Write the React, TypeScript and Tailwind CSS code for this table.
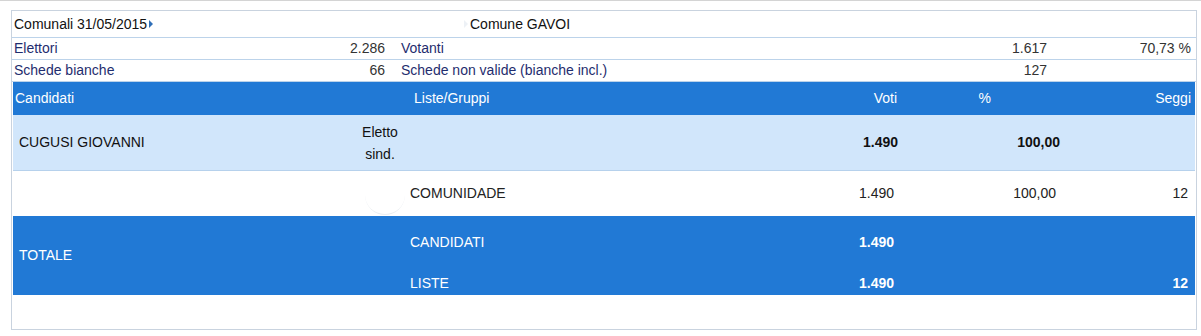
import React from "react";

const font = { fontFamily: '"Liberation Sans", Arial, sans-serif' };

function Tri({ faint }: { faint?: boolean }) {
  return (
    <span
      className={`inline-block w-0 h-0 border-y-[4px] border-y-transparent border-l-[4px] ${
        faint ? "border-l-[#edf1f6]" : "border-l-[#2f6fb8]"
      }`}
    />
  );
}

export default function App() {
  return (
    <div className="w-[1201px] h-[336px] bg-white border-t border-[#d4d4d4] pt-[9px] pl-[11px]" style={font}>
      <div className="w-[1186px] h-[320px] border border-[#c9d3df] text-[14px]">
        {/* intestazione */}
        <div className="flex items-center h-[27px] border-b border-[#bcd3ea] text-[#111]">
          <div className="w-[380px] pl-[2px] flex items-center gap-[2px]">
            Comunali 31/05/2015 <Tri />
          </div>
          <div className="flex items-center gap-[2px] pl-[72px]">
            <Tri faint /> Comune GAVOI
          </div>
        </div>

        {/* elettori / votanti */}
        <div className="flex items-center h-[22px] border-b border-[#bcd3ea]">
          <div className="w-[373px] flex justify-between pl-[2px]">
            <span className="text-[#1f2d6e]">Elettori</span>
            <span className="text-[#333]">2.286</span>
          </div>
          <div className="w-[662px] flex justify-between pl-[16px]">
            <span className="text-[#1f2d6e]">Votanti</span>
            <span className="text-[#333]">1.617</span>
          </div>
          <div className="flex-1 text-right pr-[5px] text-[#333]">70,73 %</div>
        </div>
        <div className="flex items-center h-[22px] border-b border-[#bcd3ea]">
          <div className="w-[373px] flex justify-between pl-[2px]">
            <span className="text-[#1f2d6e]">Schede bianche</span>
            <span className="text-[#333]">66</span>
          </div>
          <div className="w-[662px] flex justify-between pl-[16px]">
            <span className="text-[#1f2d6e]">Schede non valide (bianche incl.)</span>
            <span className="text-[#333]">127</span>
          </div>
        </div>

        <div className="px-[1px]">
          {/* testata tabella */}
          <div className="flex items-center h-[33px] bg-[#2179d5] text-white">
            <div className="w-[401px] pl-[2px]">Candidati</div>
            <div className="w-[340px]">Liste/Gruppi</div>
            <div className="w-[143px] text-right">Voti</div>
            <div className="w-[94px] text-right">%</div>
            <div className="flex-1 text-right pr-[4px]">Seggi</div>
          </div>

          {/* candidato */}
          <div className="flex items-center h-[56px] bg-[#d1e6fb] border-b border-[#b6d1ec] text-[#111]">
            <div className="w-[338px] pl-[6px]">CUGUSI GIOVANNI</div>
            <div className="w-[58px] text-center leading-[22px]">
              Eletto
              <br />
              sind.
            </div>
            <div className="w-[347px]" />
            <div className="w-[142px] text-right font-semibold">1.490</div>
            <div className="w-[162px] text-right font-semibold">100,00</div>
          </div>

          {/* lista */}
          <div className="relative flex items-center h-[45px] text-[#222]">
            <div className="absolute left-[352px] top-[4px] w-[40px] h-[40px] rounded-full border-b border-[#eceff2]" />
            <div className="w-[397px]" />
            <div className="w-[346px]">COMUNIDADE</div>
            <div className="w-[138px] text-right">1.490</div>
            <div className="w-[162px] text-right">100,00</div>
            <div className="flex-1 text-right pr-[7px]">12</div>
          </div>

          {/* totali */}
          <div className="flex items-center h-[79px] bg-[#2179d5] text-white">
            <div className="w-[397px] pl-[6px]">TOTALE</div>
            <div className="flex-1 flex flex-col gap-[20px] pt-[14px]">
              <div className="flex">
                <div className="w-[346px]">CANDIDATI</div>
                <div className="w-[138px] text-right font-bold">1.490</div>
              </div>
              <div className="flex">
                <div className="w-[346px]">LISTE</div>
                <div className="w-[138px] text-right font-bold">1.490</div>
                <div className="flex-1 text-right pr-[7px] font-bold">12</div>
              </div>
            </div>
          </div>
        </div>
      </div>
    </div>
  );
}
